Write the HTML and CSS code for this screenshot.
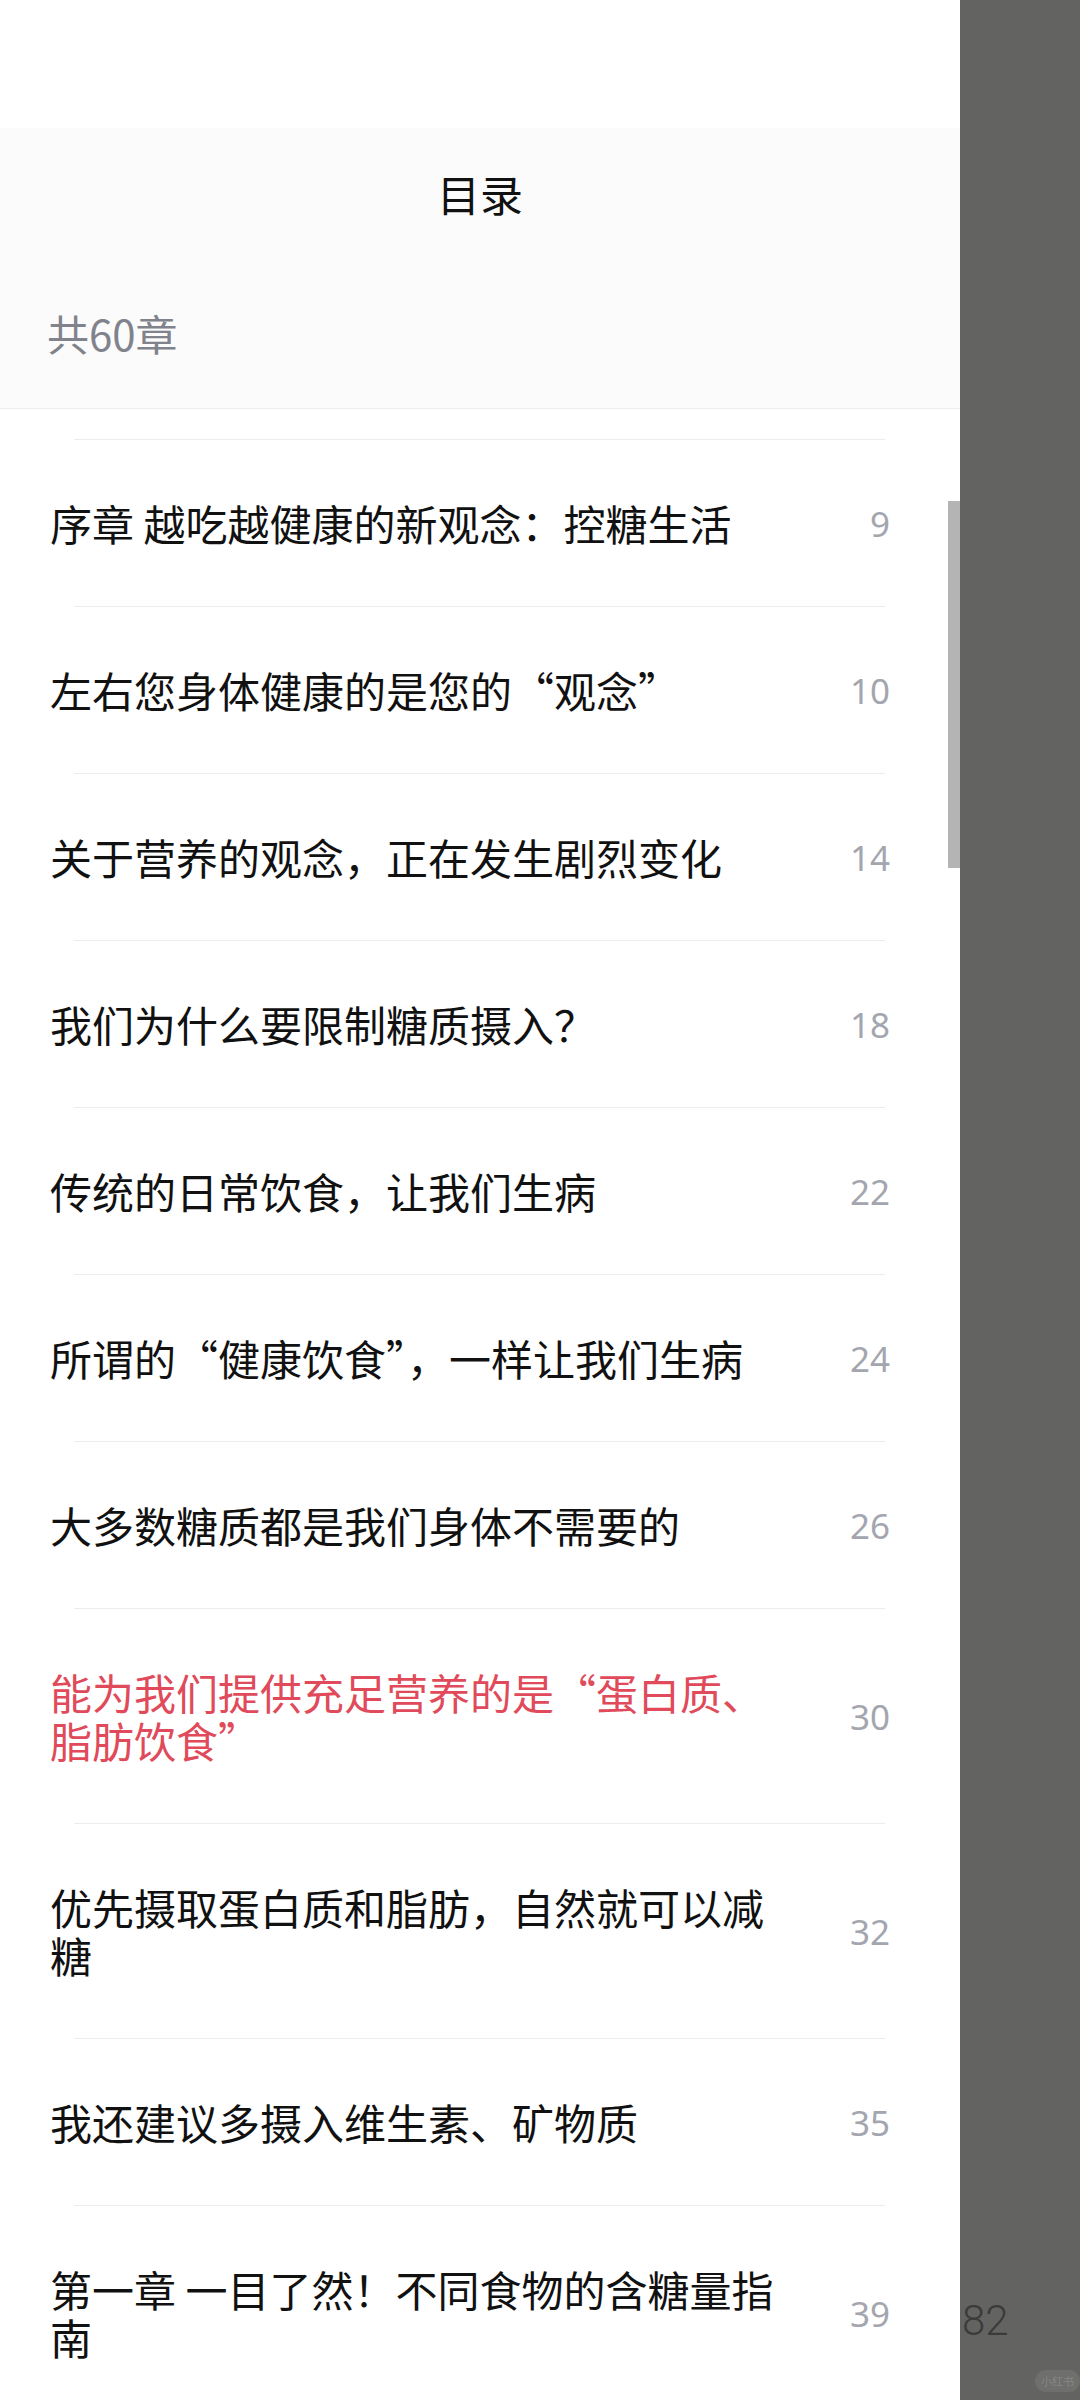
FILE: index.html
```html
<!DOCTYPE html>
<html lang="zh-CN">
<head>
    <meta charset="UTF-8">
    <meta name="viewport" content="width=device-width, initial-scale=1.0">
    <title>目录</title>
    <link rel="stylesheet" href="styles.css">
</head>
<body>
    <div class="screen">
        <div class="drawer">
            <div class="status-space"></div>
            <div class="header">
                <h1>目录</h1>
                <div class="count">共60章</div>
            </div>
            <ul class="toc">
                <li><div class="entry"><span class="title">序章 越吃越健康的新观念：控糖生活</span><span class="page">9</span></div></li>
                <li><div class="entry"><span class="title">左右您身体健康的是您的“观念”</span><span class="page">10</span></div></li>
                <li><div class="entry"><span class="title">关于营养的观念，正在发生剧烈变化</span><span class="page">14</span></div></li>
                <li><div class="entry"><span class="title">我们为什么要限制糖质摄入？</span><span class="page">18</span></div></li>
                <li><div class="entry"><span class="title">传统的日常饮食，让我们生病</span><span class="page">22</span></div></li>
                <li><div class="entry"><span class="title">所谓的“健康饮食”，一样让我们生病</span><span class="page">24</span></div></li>
                <li><div class="entry"><span class="title">大多数糖质都是我们身体不需要的</span><span class="page">26</span></div></li>
                <li class="current"><div class="entry"><span class="title">能为我们提供充足营养的是“蛋白质、脂肪饮食”</span><span class="page">30</span></div></li>
                <li><div class="entry"><span class="title">优先摄取蛋白质和脂肪，自然就可以减糖</span><span class="page">32</span></div></li>
                <li><div class="entry"><span class="title">我还建议多摄入维生素、矿物质</span><span class="page">35</span></div></li>
                <li><div class="entry"><span class="title">第一章 一目了然！不同食物的含糖量指南</span><span class="page">39</span></div></li>
            </ul>
            <div class="scrollbar"></div>
        </div>
        <div class="overlay">
            <span class="under-page">82</span>
            <span class="watermark">小红书</span>
        </div>
    </div>
</body>
</html>
```

FILE: styles.css
```css
html, body {
    margin: 0;
    padding: 0;
}
body {
    font-family: "Noto Sans CJK SC", "Noto Sans", sans-serif;
    background: #ffffff;
    color: #111111;
}
.screen {
    display: flex;
    width: 1080px;
    height: 2400px;
    overflow: hidden;
}
.drawer {
    position: relative;
    width: 960px;
    flex-shrink: 0;
    background: #ffffff;
    overflow: hidden;
}
.status-space {
    height: 128px;
}
.header {
    background: #fbfbfb;
    border-bottom: 1px solid #ededed;
    padding: 35px 0 45px;
}
.header h1 {
    margin: 0;
    text-align: center;
    font-size: 43px;
    line-height: 60px;
    font-weight: 400;
    color: #111111;
}
.count {
    margin-top: 80px;
    padding-left: 47px;
    font-size: 42px;
    line-height: 60px;
    color: #80838c;
}
.toc {
    list-style: none;
    margin: 0;
    padding: 30px 0 0;
}
.toc li {
    margin: 0 75px 0 74px;
    border-top: 1px solid #ececec;
}
.entry {
    display: flex;
    align-items: center;
    gap: 8px;
    margin: 0 -5px 0 -24px;
    padding: 59px 0;
}
.title {
    flex: 1;
    font-size: 42px;
    line-height: 48px;
    color: #111111;
}
.current .title {
    color: #e04a5a;
}
.page {
    width: 92px;
    text-align: right;
    font-family: "Noto Sans", sans-serif;
    font-size: 35px;
    color: #a3a6ae;
}
.scrollbar {
    position: absolute;
    top: 501px;
    right: 0;
    width: 12px;
    height: 367px;
    background: #b4b4b4;
}
.overlay {
    position: relative;
    flex: 1;
    background: #636461;
}
.under-page {
    position: absolute;
    left: 2px;
    top: 2296px;
    font-family: Roboto, sans-serif;
    font-weight: 300;
    font-size: 42px;
    line-height: 50px;
    color: #3b3c3a;
}
.watermark {
    position: absolute;
    left: 75px;
    top: 2370px;
    padding: 2px 6px;
    border-radius: 12px;
    background: rgba(255, 255, 255, 0.08);
    font-size: 11px;
    line-height: 18px;
    color: rgba(255, 255, 255, 0.18);
}
```
